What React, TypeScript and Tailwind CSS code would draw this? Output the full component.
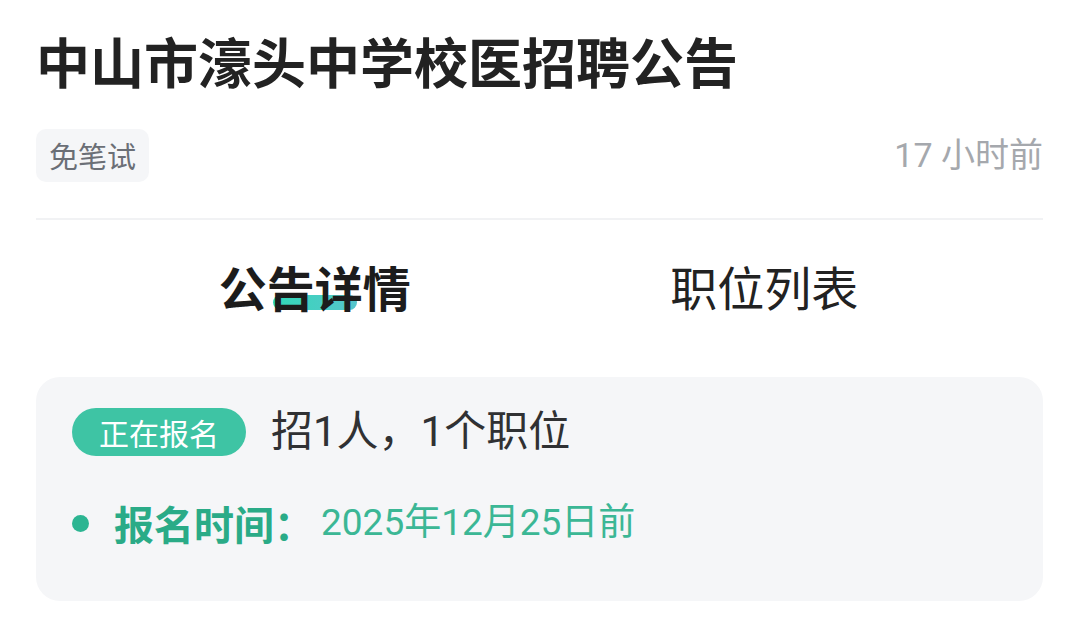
export default function App() {
  return (
    <div
      className="w-[1079px] h-[622px] bg-white overflow-hidden"
      style={{ fontFamily: '"Noto Sans CJK SC", "Noto Sans", sans-serif' }}
    >
      <div className="px-[36px]">
        <h1 className="pt-[34px] text-[54px] leading-[54px] font-bold text-[#222]">
          中山市濠头中学校医招聘公告
        </h1>
        <div className="mt-[41px] flex items-center justify-between">
          <span className="h-[53px] px-[13px] flex items-center rounded-[10px] bg-[#f5f6f8] text-[29px] text-[#6b6f76]">
            免笔试
          </span>
          <span
            className="text-[34px] text-[#a5a8ad]"
            style={{ fontFamily: 'Roboto, "Noto Sans CJK SC", sans-serif' }}
          >
            17 小时前
          </span>
        </div>
        <div className="mt-[36px] h-[2px] bg-[#f1f2f4]" />
      </div>

      <div className="mx-[90px] mt-[38px] flex">
        <div className="flex-1 flex justify-center">
          <div className="relative">
            <div className="absolute left-1/2 -translate-x-1/2 top-[37px] w-[84px] h-[15px] rounded-full bg-gradient-to-r from-[#2fd8b8] to-[#55c5cc]" />
            <span className="relative text-[48px] leading-[56px] font-bold text-[#1c1c1c]">公告详情</span>
          </div>
        </div>
        <div className="flex-1 flex justify-center">
          <span className="text-[47px] leading-[56px] text-[#222]">职位列表</span>
        </div>
      </div>

      <div className="mx-[36px] mt-[63px] h-[224px] rounded-[24px] bg-[#f5f6f8] px-[36px] pt-[31px]">
        <div className="flex items-center">
          <span className="h-[48px] px-[27px] flex items-center rounded-full bg-[#3ec4a4] text-[30px] text-white">
            正在报名
          </span>
          <span
            className="ml-[25px] text-[42px] leading-[48px] text-[#303133]"
            style={{ fontFamily: 'Roboto, "Noto Sans CJK SC", sans-serif' }}
          >
            招1人，1个职位
          </span>
        </div>
        <div className="mt-[42px] flex items-center">
          <span className="w-[17px] h-[17px] rounded-full bg-[#2cb592]" />
          <span className="ml-[25px] text-[40px] leading-[50px] font-bold text-[#2aab87]">报名时间：</span>
          <span
            className="ml-[7px] text-[37px] leading-[50px] text-[#3bb795]"
            style={{ fontFamily: 'Roboto, "Noto Sans CJK SC", sans-serif' }}
          >
            2025年12月25日前
          </span>
        </div>
      </div>
    </div>
  );
}
